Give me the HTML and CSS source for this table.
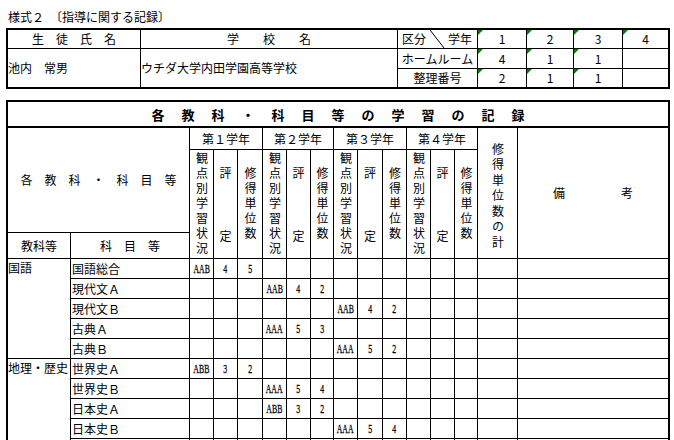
FILE: index.html
```html
<!DOCTYPE html>
<html lang="ja">
<head>
<meta charset="utf-8">
<title>様式２ 指導に関する記録</title>
<link rel="stylesheet" href="styles.css">
</head>
<body>
<div class="page">
  <div class="form-title">様式２　〔指導に関する記録〕</div>

  <div class="info">
    <div>生　徒　氏　名</div>
    <div>学　　校　　名</div>
    <div class="kubun"><span>区分</span><svg class="diag" width="20" height="18" viewBox="0 0 20 18"><line x1="3" y1="0" x2="17" y2="18" stroke="#000" stroke-width="1"/></svg><span>学年</span></div>
    <div class="flag">1</div>
    <div class="flag">2</div>
    <div class="flag">3</div>
    <div class="flag">4</div>

    <div class="rs2 left">池内　常男</div>
    <div class="rs2 left">ウチダ大学内田学園高等学校</div>
    <div>ホームルーム</div>
    <div class="flag">4</div>
    <div class="flag">1</div>
    <div class="flag">1</div>
    <div></div>

    <div>整理番号</div>
    <div class="flag">2</div>
    <div class="flag">1</div>
    <div class="flag">1</div>
    <div></div>
  </div>

  <div class="record">
    <div class="record-title">各教科・科目等の学習の記録</div>
    <div class="grid">
      <div class="hd-main">各　教　科　・　科　目　等</div>
      <div class="yr">第１学年</div>
      <div class="yr">第２学年</div>
      <div class="yr">第３学年</div>
      <div class="yr">第４学年</div>
      <div class="rs3 total"><span class="vt vt-total">修得単位数の計</span></div>
      <div class="rs3 biko"><span>備</span><span>考</span></div>

      <div class="sub"><span class="vt">観点別学習状況</span></div>
      <div class="sub"><span class="hyo"><span>評</span><span>定</span></span></div>
      <div class="sub"><span class="vt">修得単位数</span></div>
      <div class="sub"><span class="vt">観点別学習状況</span></div>
      <div class="sub"><span class="hyo"><span>評</span><span>定</span></span></div>
      <div class="sub"><span class="vt">修得単位数</span></div>
      <div class="sub"><span class="vt">観点別学習状況</span></div>
      <div class="sub"><span class="hyo"><span>評</span><span>定</span></span></div>
      <div class="sub"><span class="vt">修得単位数</span></div>
      <div class="sub"><span class="vt">観点別学習状況</span></div>
      <div class="sub"><span class="hyo"><span>評</span><span>定</span></span></div>
      <div class="sub"><span class="vt">修得単位数</span></div>

      <div>教科等</div>
      <div>科　目　等</div>

      <!-- 国語総合 -->
      <div class="kyoka rs5">国語</div>
      <div class="subj">国語総合</div>
      <div class="v"><span>AAB</span></div><div class="v"><span>4</span></div><div class="v"><span>5</span></div>
      <div></div><div></div><div></div>
      <div></div><div></div><div></div>
      <div></div><div></div><div></div>
      <div></div><div></div>

      <!-- 現代文Ａ -->
      <div class="subj">現代文Ａ</div>
      <div></div><div></div><div></div>
      <div class="v"><span>AAB</span></div><div class="v"><span>4</span></div><div class="v"><span>2</span></div>
      <div></div><div></div><div></div>
      <div></div><div></div><div></div>
      <div></div><div></div>

      <!-- 現代文Ｂ -->
      <div class="subj">現代文Ｂ</div>
      <div></div><div></div><div></div>
      <div></div><div></div><div></div>
      <div class="v"><span>AAB</span></div><div class="v"><span>4</span></div><div class="v"><span>2</span></div>
      <div></div><div></div><div></div>
      <div></div><div></div>

      <!-- 古典Ａ -->
      <div class="subj">古典Ａ</div>
      <div></div><div></div><div></div>
      <div class="v"><span>AAA</span></div><div class="v"><span>5</span></div><div class="v"><span>3</span></div>
      <div></div><div></div><div></div>
      <div></div><div></div><div></div>
      <div></div><div></div>

      <!-- 古典Ｂ -->
      <div class="subj">古典Ｂ</div>
      <div></div><div></div><div></div>
      <div></div><div></div><div></div>
      <div class="v"><span>AAA</span></div><div class="v"><span>5</span></div><div class="v"><span>2</span></div>
      <div></div><div></div><div></div>
      <div></div><div></div>

      <!-- 世界史Ａ -->
      <div class="kyoka rs6">地理・歴史</div>
      <div class="subj">世界史Ａ</div>
      <div class="v"><span>ABB</span></div><div class="v"><span>3</span></div><div class="v"><span>2</span></div>
      <div></div><div></div><div></div>
      <div></div><div></div><div></div>
      <div></div><div></div><div></div>
      <div></div><div></div>

      <!-- 世界史Ｂ -->
      <div class="subj">世界史Ｂ</div>
      <div></div><div></div><div></div>
      <div class="v"><span>AAA</span></div><div class="v"><span>5</span></div><div class="v"><span>4</span></div>
      <div></div><div></div><div></div>
      <div></div><div></div><div></div>
      <div></div><div></div>

      <!-- 日本史Ａ -->
      <div class="subj">日本史Ａ</div>
      <div></div><div></div><div></div>
      <div class="v"><span>ABB</span></div><div class="v"><span>3</span></div><div class="v"><span>2</span></div>
      <div></div><div></div><div></div>
      <div></div><div></div><div></div>
      <div></div><div></div>

      <!-- 日本史Ｂ -->
      <div class="subj">日本史Ｂ</div>
      <div></div><div></div><div></div>
      <div></div><div></div><div></div>
      <div class="v"><span>AAA</span></div><div class="v"><span>5</span></div><div class="v"><span>4</span></div>
      <div></div><div></div><div></div>
      <div></div><div></div>

      <!-- continuation rows (below the visible frame) -->
      <div class="subj"></div>
      <div></div><div></div><div></div>
      <div></div><div></div><div></div>
      <div></div><div></div><div></div>
      <div></div><div></div><div></div>
      <div></div><div></div>

      <div class="subj"></div>
      <div></div><div></div><div></div>
      <div></div><div></div><div></div>
      <div></div><div></div><div></div>
      <div></div><div></div><div></div>
      <div></div><div></div>
    </div>
  </div>
</div>
</body>
</html>
```

FILE: styles.css
```css
html, body {
  margin: 0;
  padding: 0;
  background: #fff;
}

body {
  width: 674px;
  height: 440px;
  overflow: hidden;
  font-family: "Noto Sans CJK JP", sans-serif;
  font-size: 12px;
  color: #000;
}

.page {
  padding-left: 6px;
}

.form-title {
  height: 28px;
  box-sizing: border-box;
  padding: 8px 0 0 2px;
  line-height: 18px;
}

/* ---------- top info table ---------- */
.info {
  display: grid;
  width: 664px;
  box-sizing: border-box;
  border: 2px solid #000;
  background: #000;
  gap: 1px;
  grid-template-columns: 132px 256px 79px 48px 46px 48px 45px;
  grid-template-rows: 18px 19px 18px;
}

.info > div,
.grid > div {
  background: #fff;
  position: relative;
  display: flex;
  align-items: center;
  justify-content: center;
  line-height: 1;
  white-space: nowrap;
  overflow: hidden;
}

.info .rs2 {
  grid-row: span 2;
}

.info .left {
  justify-content: flex-start;
  padding-left: 0;
}

.info .kubun {
  justify-content: space-between;
  align-items: stretch;
  padding: 0 5px 0 4px;
}

.kubun span {
  display: flex;
  align-items: center;
}

.diag {
  display: block;
  flex: none;
}

.flag::before {
  content: "";
  position: absolute;
  top: 0;
  left: 0;
  border-top: 5px solid #008000;
  border-right: 5px solid transparent;
}

/* ---------- record table ---------- */
.record {
  margin-top: 11px;
  width: 664px;
  box-sizing: border-box;
  border: 2px solid #000;
}

.record-title {
  height: 26px;
  box-sizing: border-box;
  border-bottom: 2px solid #000;
  display: flex;
  align-items: center;
  justify-content: center;
  font-weight: bold;
  font-size: 13px;
  letter-spacing: 17px;
  padding-left: 17px;
}

.grid {
  display: grid;
  gap: 1px;
  background: #000;
  grid-template-columns: 62px 118px 23px 23px 24px 23px 23px 22px 23px 24px 23px 23px 23px 22px 39px 150px;
  grid-template-rows: 21px 82px 25px;
  grid-auto-rows: 19px;
}

.grid .hd-main {
  grid-column: span 2;
  grid-row: span 2;
}

.grid .yr {
  grid-column: span 3;
}

.grid .rs3 {
  grid-row: span 3;
}

.grid .sub {
  grid-row: span 2;
}

.grid .rs5 {
  grid-row: span 5;
}

.grid .rs6 {
  grid-row: span 6;
}

.vt {
  writing-mode: vertical-rl;
  letter-spacing: 3px;
  line-height: 1;
}

.vt-total {
  letter-spacing: 3.5px;
  margin-top: 8px;
}

.hyo {
  display: flex;
  flex-direction: column;
  justify-content: space-between;
  height: 75px;
}

.grid .biko {
  gap: 56px;
}

.grid .kyoka {
  align-items: flex-start;
  justify-content: flex-start;
  padding: 3px 0 0 0;
}

.grid .subj {
  justify-content: flex-start;
  padding-left: 1px;
}

.grid .v {
  font-family: "Liberation Serif", serif;
  font-size: 13px;
}

.grid .v span {
  display: inline-block;
  transform: scaleX(0.6);
  -webkit-text-stroke: 0.3px #000;
}
```
